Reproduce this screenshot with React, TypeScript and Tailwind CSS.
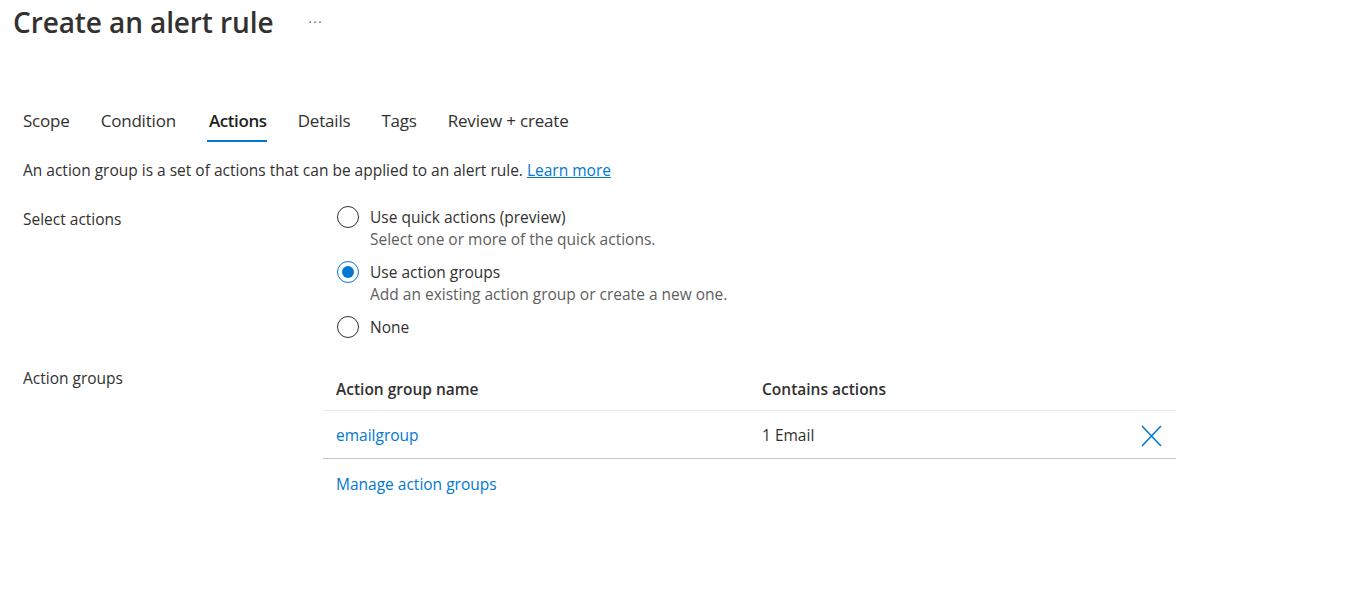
import { useState } from 'react';

const tabs = ['Scope', 'Condition', 'Actions', 'Details', 'Tags', 'Review + create'];

const Radio = ({ checked }: { checked: boolean }) => (
    <span
        className={`flex-none w-[22px] h-[22px] rounded-full border ${checked ? 'border-[#0078d4]' : 'border-[#323130]'} flex items-center justify-center`}
    >
        {checked && <span className="w-[12px] h-[12px] rounded-full bg-[#0078d4]" />}
    </span>
);

export default function App() {
    const [choice, setChoice] = useState('groups');

    const options = [
        { id: 'quick', label: 'Use quick actions (preview)', sub: 'Select one or more of the quick actions.' },
        { id: 'groups', label: 'Use action groups', sub: 'Add an existing action group or create a new one.' },
        { id: 'none', label: 'None', sub: '' },
    ];

    return (
        <div className="w-[1362px] h-[610px] bg-white text-[#323130] font-['Segoe_UI','Open_Sans',sans-serif] overflow-hidden">
            <header className="flex items-center pl-[13px] pt-[1px] h-[42px]">
                <h1 className="text-[28px] font-semibold tracking-[-0.1px] leading-[36px]">Create an alert rule</h1>
                <span className="ml-[35px] mt-[2px] text-[13px] text-[#605e5c] tracking-[1.5px]">···</span>
            </header>

            {/* tabs */}
            <nav className="flex pl-[23px] mt-[67px] gap-[31px] text-[17px]">
                {tabs.map((t) => (
                    <div key={t} className="flex flex-col items-center">
                        <span
                            className={`leading-[24px] ${t === 'Actions' ? 'font-semibold text-[#201f1e] tracking-[-0.4px] ml-[2px]' : 'tracking-[-0.2px]'}`}
                        >
                            {t}
                        </span>
                        <span className={`mt-[7px] h-[2px] w-full ${t === 'Actions' ? 'bg-[#0078d4]' : 'bg-transparent'}`} />
                    </div>
                ))}
            </nav>

            <p className="pl-[23px] mt-[18px] text-[15.5px] leading-[20px]">
                An action group is a set of actions that can be applied to an alert rule.{' '}
                <a className="text-[#0078d4] underline">Learn more</a>
            </p>

            <section className="flex pl-[23px] mt-[26px]">
                <div className="w-[314px] text-[15.5px] leading-[20px] pt-[3px]">Select actions</div>
                <div className="flex flex-col gap-[11px]">
                    {options.map((o) => (
                        <label key={o.id} className="flex gap-[11px] cursor-pointer" onClick={() => setChoice(o.id)}>
                            <Radio checked={choice === o.id} />
                            <div className="text-[15.5px] leading-[22px]">
                                <div>{o.label}</div>
                                {o.sub && <div className="text-[#605e5c]">{o.sub}</div>}
                            </div>
                        </label>
                    ))}
                </div>
            </section>

            <section className="flex pl-[23px] mt-[30px]">
                <div className="w-[300px] text-[15.5px] leading-[20px]">Action groups</div>
                <div className="w-[853px]">
                    <div className="flex h-[43px] items-center border-b border-[#edebe9] text-[15.5px] font-semibold pt-[1px]">
                        <div className="w-[439px] pl-[13px]">Action group name</div>
                        <div>Contains actions</div>
                    </div>
                    <div className="flex h-[48px] items-center border-b border-[#c8c6c4] text-[15.5px] pt-[3px]">
                        <div className="w-[439px] pl-[13px] text-[#0078d4]">emailgroup</div>
                        <div className="flex-1">1 Email</div>
                        <svg className="mr-[14px]" width="21" height="22" viewBox="0 0 21 22" fill="none">
                            <path d="M1 1L20 21M20 1L1 21" stroke="#0078d4" strokeWidth="1.6" />
                        </svg>
                    </div>
                    <div className="pl-[13px] mt-[14px] text-[15.5px] text-[#0078d4]">Manage action groups</div>
                </div>
            </section>
        </div>
    );
}
